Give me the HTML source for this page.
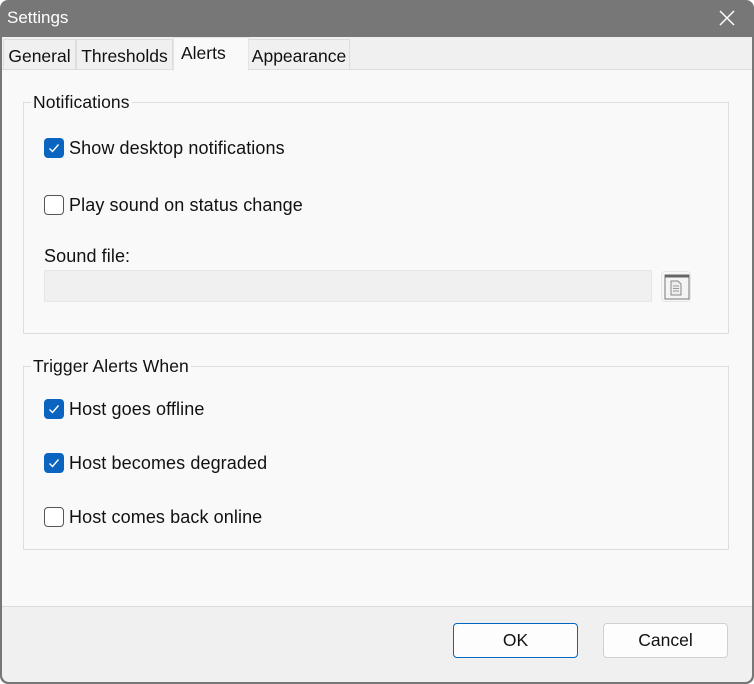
<!DOCTYPE html>
<html><head><style>
body{margin:0;width:754px;height:684px;background:#fff;font-family:"Liberation Sans",sans-serif;color:#111;position:relative;overflow:hidden}
.win{position:absolute;left:0;top:0;width:754px;height:684px;background:#777;border-radius:8px 8px 8px 8px}
.title{position:absolute;left:7px;top:8px;font-size:17px;color:#fff}
.close{position:absolute;left:717px;top:8px}
.inner{position:absolute;left:2px;top:37px;width:750px;height:645px;background:#f0f0f0;border-radius:0 0 7px 7px}
.page{position:absolute;left:0;top:32px;width:750px;height:536px;background:#f9f9f9;border-top:1px solid #ddd;border-bottom:1px solid #ddd}
.tab{position:absolute;top:2px;height:30px;background:#f0f0f0;border:1px solid #ddd;border-bottom:none;font-size:17.5px;line-height:32px;text-align:center;box-sizing:border-box}
.tab.sel{background:#f9f9f9;top:0;height:34px;line-height:30px;border-color:#e4e4e4;z-index:2;text-align:left;padding-left:7px}
.grp{position:absolute;left:21px;width:706px;border:1px solid #ddd;box-sizing:border-box}
.lbl{position:absolute;left:7px;top:-11px;background:#f9f9f9;padding:0 2px;font-size:17.5px;letter-spacing:0.1px}
.cb{position:absolute;left:20px;width:20px;height:20px;box-sizing:border-box;border-radius:4px}
.cb.on{background:#0a64c0}
.cb.off{border:1.5px solid #555;background:#fff}
.t{position:absolute;left:45px;font-size:18px;letter-spacing:0.1px;white-space:nowrap}
.btn{position:absolute;top:586px;width:125px;height:35px;box-sizing:border-box;border:1px solid #d0d0d0;border-radius:4px;background:#fdfdfd;font-size:17.5px;text-align:center;line-height:33px}
</style></head><body>
<div class="win">
<div class="title">Settings</div>
<svg class="close" width="20" height="20" viewBox="0 0 20 20"><path d="M3 3L17 17M17 3L3 17" stroke="#fff" stroke-width="1.5"/></svg>
<div class="inner">
<div class="tab" style="left:1px;width:73px">General</div>
<div class="tab" style="left:74px;width:97px">Thresholds</div>
<div class="tab sel" style="left:171px;width:76px">Alerts</div>
<div class="tab" style="left:246px;width:102px">Appearance</div>
<div class="page">
<div class="grp" style="top:32px;height:232px">
<div class="lbl">Notifications</div>
<div class="cb on" style="top:35px"><svg width="20" height="20"><path d="M5.5 10.5l3 3 6-7" stroke="#fff" stroke-width="1.4" fill="none"/></svg></div>
<div class="t" style="top:35px">Show desktop notifications</div>
<div class="cb off" style="top:92px"></div>
<div class="t" style="top:92px">Play sound on status change</div>
<div class="t" style="left:20px;top:143px">Sound file:</div>
<div style="position:absolute;left:20px;top:167px;width:608px;height:32px;background:#f0f0f0;border:1px solid #e6e6e6;box-sizing:border-box"></div>
<div style="position:absolute;left:637px;top:168px;width:30px;height:31px;border:1px solid #e6e6e6;border-radius:4px;box-sizing:border-box;background:#f7f7f7">
<svg width="28" height="29" viewBox="0 0 28 29"><rect x="3" y="3" width="24" height="24" fill="#f4f4f4" stroke="#777" stroke-width="1"/><rect x="3" y="2.5" width="24" height="3" fill="#666"/><path d="M9 9h7l3 3v11h-10z" fill="#eee" stroke="#888"/><path d="M11 14h6M11 16.5h6M11 19h6" stroke="#999"/></svg></div>
</div>
<div class="grp" style="top:296px;height:184px">
<div class="lbl">Trigger Alerts When</div>
<div class="cb on" style="top:32px"><svg width="20" height="20"><path d="M5.5 10.5l3 3 6-7" stroke="#fff" stroke-width="1.4" fill="none"/></svg></div>
<div class="t" style="top:32px">Host goes offline</div>
<div class="cb on" style="top:86px"><svg width="20" height="20"><path d="M5.5 10.5l3 3 6-7" stroke="#fff" stroke-width="1.4" fill="none"/></svg></div>
<div class="t" style="top:86px">Host becomes degraded</div>
<div class="cb off" style="top:140px"></div>
<div class="t" style="top:140px">Host comes back online</div>
</div>
</div>
<div class="btn" style="left:451px;border-color:#0067c0">OK</div>
<div class="btn" style="left:601px">Cancel</div>
</div>
</div>
</body></html>
